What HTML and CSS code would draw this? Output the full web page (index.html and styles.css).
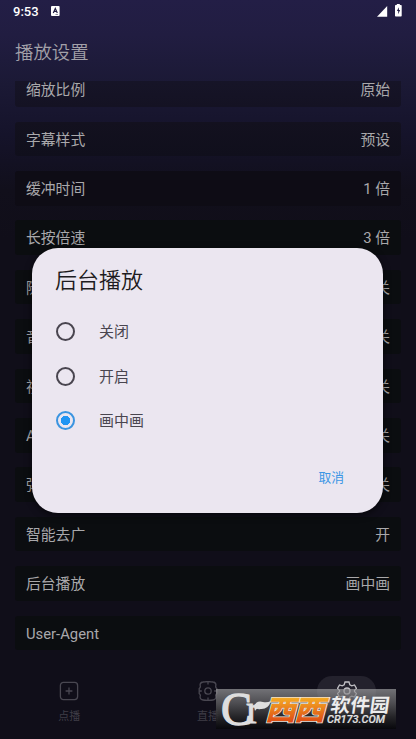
FILE: index.html
```html
<!DOCTYPE html>
<html lang="zh-CN">
<head>
<meta charset="utf-8">
<title>播放设置</title>
<link rel="stylesheet" href="styles.css">
</head>
<body>
<div class="screen">
  <header class="status">
    <span class="clock">9:53</span>
    <svg class="kb" width="9" height="10" viewBox="0 0 9 10"><rect width="8.6" height="10" rx="1" fill="#fff"/><path d="M2.3 7 4.3 2.4 6.3 7M3.1 5.5h2.4" fill="none" stroke="#211d43" stroke-width="1.2"/><path d="M4.5 8.5h2.5" stroke="#211d43" stroke-width=".5"/></svg>
    <svg class="signal" width="11" height="11" viewBox="0 0 11 11"><path d="M10.2 0v10.8H0z" fill="#fff"/></svg>
    <svg class="battery" width="7" height="13" viewBox="0 0 7 13"><path d="M1.8 0h3v1H6q.7 0 .7.8v10q0 .8-.7.8H.8Q0 12.600 0 11.800v-10Q0 1 .8 1h1z" fill="#fff"/><path d="M3.900 3.200 1.900 7h1.300v3.200L5.100 6H3.900z" fill="#211d43"/></svg>
  </header>
  <h1 class="title">播放设置</h1>
  <main class="viewport">
    <div class="list">
      <div class="row"><span>缩放比例</span><span>原始</span></div>
      <div class="row"><span>字幕样式</span><span>预设</span></div>
      <div class="row"><span>缓冲时间</span><span>1 倍</span></div>
      <div class="row"><span>长按倍速</span><span>3 倍</span></div>
      <div class="row"><span>隧</span><span>关</span></div>
      <div class="row"><span>音</span><span>关</span></div>
      <div class="row"><span>视</span><span>关</span></div>
      <div class="row"><span>A</span><span>关</span></div>
      <div class="row"><span>弹</span><span>关</span></div>
      <div class="row"><span>智能去广</span><span>开</span></div>
      <div class="row"><span>后台播放</span><span>画中画</span></div>
      <div class="row"><span>User-Agent</span><span></span></div>
    </div>
  </main>
  <nav class="nav">
    <div class="tab">
      <div class="pill"><svg width="20" height="20" viewBox="0 0 20 20"><rect x="1.400" y="1.400" width="17.200" height="17.200" rx="3"/><path d="M10 6.600v6.800M6.600 10h6.800"/></svg></div>
      <span>点播</span>
    </div>
    <div class="tab">
      <div class="pill"><svg width="20" height="20" viewBox="0 0 20 20"><path d="M5 1Q10 .2 15 1 17.600 1.200 18 4q-1 2 .8 3.600v4.800Q17 14 18 16q-.4 2.800-3 3-5 .8-10 0-2.600-.2-3-3 1-2-.8-3.600V7.600Q3 6 2 4q.4-2.800 3-3z"/><circle cx="10" cy="10" r="3.200"/><path d="M10 1v2.500M10 16.500V19M1.200 10h2.600M16.200 10h2.600"/></svg></div>
      <span>直播</span>
    </div>
    <div class="tab">
      <div class="pill active"><svg width="20" height="20" viewBox="0 0 20 20"><path d="M8 1h4l.8 2.700 2 1.100 2.700-.8 2 3.400-2 2v1.200l2 2-2 3.400-2.700-.8-2 1.100L12 19H8l-.8-2.700-2-1.100-2.700.8-2-3.400 2-2V9.400l-2-2L2.500 4l2.700.8 2-1.100z"/><circle cx="10" cy="10" r="3"/></svg></div>
    </div>
  </nav>
  <section class="dialog">
    <h2>后台播放</h2>
    <div class="option"><i class="radio"></i><span>关闭</span></div>
    <div class="option"><i class="radio"></i><span>开启</span></div>
    <div class="option"><i class="radio checked"></i><span>画中画</span></div>
    <div class="actions"><span>取消</span></div>
  </section>
  <div class="watermark">
    <svg width="180" height="40" viewBox="0 0 180 40">
      <defs><linearGradient id="orange" gradientUnits="userSpaceOnUse" x1="0" y1="8" x2="0" y2="34"><stop stop-color="#f5ae25"/><stop offset="1" stop-color="#dc4713"/></linearGradient></defs>
      <text class="mark-c" x="5" y="36" textLength="31" lengthAdjust="spacingAndGlyphs">C</text>
      <text class="mark-r" x="30" y="34" textLength="14" lengthAdjust="spacingAndGlyphs">r</text>
      <path class="leaf" d="M38 18q2-7 9-5 4 1 8-1-3 9-11 8-4-1-5 2z"/>
      <g class="xixi" transform="skewX(-15)"><text x="57" y="31" textLength="31" lengthAdjust="spacingAndGlyphs">西</text><text x="86" y="31" textLength="31" lengthAdjust="spacingAndGlyphs">西</text></g>
      <g transform="skewX(-8)"><text class="brand" x="117" y="23" textLength="59" lengthAdjust="spacingAndGlyphs">软件园</text></g>
      <text class="domain" x="111" y="34" textLength="58" lengthAdjust="spacingAndGlyphs">CR173.COM</text>
    </svg>
  </div>
</div>
</body>
</html>
```
FILE: styles.css
```css
* { box-sizing: border-box; }
body { margin: 0; background: #100e19; }
.screen {
  position: relative;
  width: 416px;
  height: 739px;
  overflow: hidden;
  display: flex;
  flex-direction: column;
  font-family: Roboto, "Noto Sans CJK SC", sans-serif;
  color: #a9a8ab;
  background: linear-gradient(#231e46 0, #211d41 35px, #1b1935 85px, #15132a 135px, #110f1b 190px, #100e19 240px);
}
.status { display: flex; height: 28px; padding: 0 14px 0 13px; flex: none; }
.clock { width: 38px; font-size: 13px; font-weight: 500; line-height: 24px; color: #fff; }
.kb { margin-top: 6px; }
.signal { margin: 6px 7px 0 auto; }
.battery { margin-top: 4px; }
.title { margin: 0; padding-left: 15px; height: 53px; flex: none; font-size: 18.4px; font-weight: 350; line-height: 50px; color: #a3a1a9; }
.viewport { height: 580px; flex: none; overflow: hidden; padding: 0 15px; }
.list { display: flex; flex-direction: column; gap: 14.8px; margin-top: -8.8px; }
.row {
  display: flex;
  justify-content: space-between;
  height: 34.6px;
  flex: none;
  padding: 0 11px;
  border-radius: 3px;
  background: #0b0d10;
  font-size: 14.8px;
  line-height: 37.4px;
}
.row:nth-child(1) { background: linear-gradient(#171529, #141223); }
.row:nth-child(2) { background: linear-gradient(#13111f, #100f1c); }
.row:nth-child(3) { background: #0e0c15; }
.nav { display: flex; height: 78px; flex: none; padding-top: 15px; }
.tab { flex: 1; display: flex; flex-direction: column; align-items: center; font-size: 11px; line-height: 16px; color: #3f3d47; }
.tab span { margin-top: 3px; }
.pill { width: 59px; height: 30px; border-radius: 15px; display: flex; align-items: center; justify-content: center; }
.pill svg { fill: none; stroke: #494751; stroke-width: 1.3; }
.active { background: #24222d; }
.active svg { stroke: #c4c3c7; }
.dialog {
  position: absolute;
  left: 32px;
  top: 248px;
  width: 351px;
  height: 265px;
  padding: 14.5px 23px 0;
  border-radius: 26px;
  background: #ebe6f0;
  box-shadow: 0 2px 7px #0009;
}
.dialog h2 { margin: 0 0 11px; font-size: 22px; font-weight: 350; line-height: 36px; color: #1d1b20; }
.option { display: flex; align-items: center; height: 44.4px; padding-left: 1px; gap: 24px; font-size: 15px; color: #49454f; }
.option span { margin-top: -2px; }
.radio { width: 19px; height: 19px; border: 2px solid #49454f; border-radius: 50%; }
.checked { border-color: #3a94e0; background: radial-gradient(circle, #2195f3 4.500px, transparent 5px); }
.actions { display: flex; justify-content: flex-end; padding-right: 16px; margin-top: 25px; font-size: 12.8px; line-height: 20px; color: #3c97e5; }
.watermark { position: absolute; left: 216px; top: 689px; width: 180px; height: 40px; background: linear-gradient(rgba(160,160,162,.68) 0, rgba(100,100,102,.74) 35%, rgba(40,40,42,.85) 70%, #08080c); }
.watermark svg { display: block; overflow: visible; }
.mark-c { font: 47px "Liberation Serif", serif; fill: #dedede; stroke: #dedede; stroke-width: 1.3; }
.mark-r { font: 42px "Liberation Serif", serif; fill: #dedede; stroke: #dedede; stroke-width: .8; }
.leaf { fill: #dedede; }
.xixi text { font: 900 27.5px "Noto Sans CJK SC", sans-serif; fill: url(#orange); stroke: #ece6dc; stroke-width: 1.6; paint-order: stroke; }
.brand { font: 700 19px "Noto Sans CJK SC", sans-serif; fill: #ededed; }
.domain { font: italic 500 11px Roboto, sans-serif; fill: #e2e2e2; stroke: #e2e2e2; stroke-width: .2; }
```
